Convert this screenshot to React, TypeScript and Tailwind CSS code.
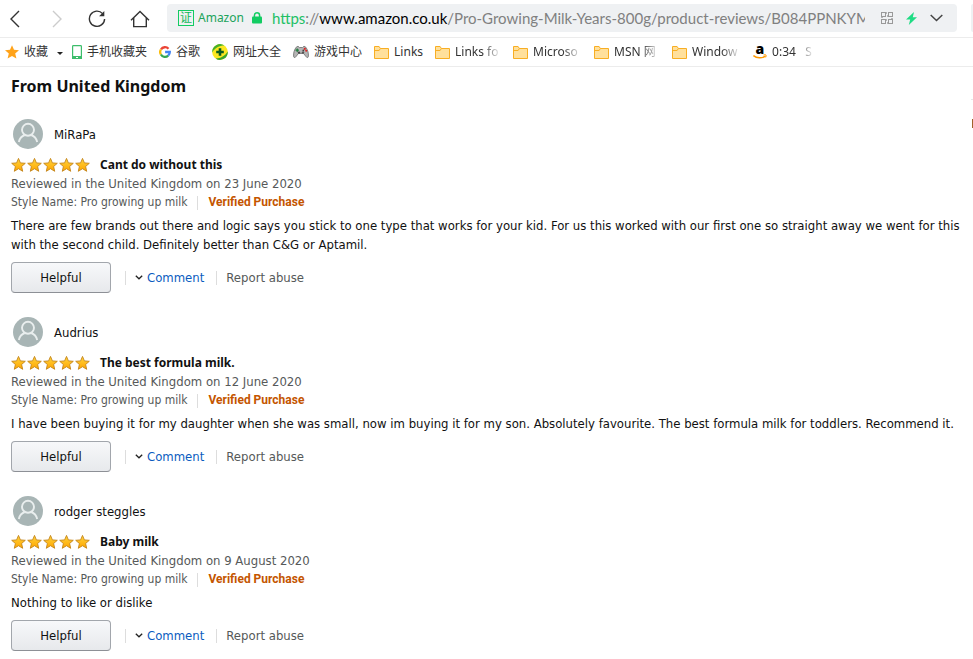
import type { ReactNode } from "react";

type Review = {
  id: string;
  author: string;
  title: string;
  date: string;
  body: string;
};

const reviews: Review[] = [
  {
    id: "r1",
    author: "MiRaPa",
    title: "Cant do without this",
    date: "23 June 2020",
    body: "There are few brands out there and logic says you stick to one type that works for your kid. For us this worked with our first one so straight away we went for this with the second child. Definitely better than C&G or Aptamil.",
  },
  {
    id: "r2",
    author: "Audrius",
    title: "The best formula milk.",
    date: "12 June 2020",
    body: "I have been buying it for my daughter when she was small, now im buying it for my son. Absolutely favourite. The best formula milk for toddlers. Recommend it.",
  },
  {
    id: "r3",
    author: "rodger steggles",
    title: "Baby milk",
    date: "9 August 2020",
    body: "Nothing to like or dislike",
  },
];

function ArrowIcon({ d, stroke }: { d: string; stroke: string }) {
  return (
    <svg width="10" height="18" viewBox="0 0 10 18" fill="none" stroke={stroke} strokeWidth="1.4">
      <path d={d} />
    </svg>
  );
}

function ReloadIcon() {
  return (
    <svg width="18" height="18" viewBox="0 0 18 18" fill="none" stroke="#333" strokeWidth="1.4">
      <path d="M14.6 3.6A7.6 7.6 0 1 0 16.6 9" />
      <path d="M16.3 1v5.2h-5.2z" fill="#333" stroke="none" />
    </svg>
  );
}

function HomeIcon() {
  return (
    <svg width="20" height="18" viewBox="0 0 20 18" fill="none" stroke="#333" strokeWidth="1.4">
      <path d="M1 10.3 10 1.4l9 8.9" />
      <path d="M3.7 8v8.6h12.6V8" />
    </svg>
  );
}

function LockIcon() {
  return (
    <svg width="10" height="12" viewBox="0 0 10 12">
      <path d="M2.4 5.5V3.4a2.6 2.6 0 0 1 5.2 0v2.1" fill="none" stroke="#12cc62" strokeWidth="1.5" />
      <rect y="4.6" width="10" height="7" rx="1" fill="#12cc62" />
    </svg>
  );
}

function QrIcon() {
  return (
    <svg width="12" height="12" viewBox="0 0 12 12" fill="none" stroke="#999">
      <rect x=".5" y=".5" width="4" height="4" />
      <rect x="7.5" y=".5" width="4" height="4" />
      <rect x=".5" y="7.5" width="4" height="4" />
      <rect x="7.5" y="7.5" width="4" height="4" />
      <path d="M5.5 0v2M6.5 3v2M0 5.5h2M5.5 7v2M6.5 10v2M10 6.5h2" strokeWidth=".7" />
    </svg>
  );
}

function StarBookmarkIcon() {
  return (
    <svg width="14" height="14" viewBox="0 0 14 14" fill="#ffa31a">
      <path d="m7 .2 2 4.6 5 .5-3.8 3.3 1.2 5L7 11l-4.4 2.6 1.2-5L0 5.3l5-.5z" />
    </svg>
  );
}

function PhoneIcon() {
  return (
    <svg width="10" height="14" viewBox="0 0 10 14">
      <rect x=".6" y=".6" width="8.8" height="12.8" rx=".8" fill="#fff" stroke="#3dbd6b" strokeWidth="1.2" />
      <path d="M0 11h10v3H0z" fill="#3dbd6b" />
      <path d="M4 12.5h2" stroke="#fff" />
    </svg>
  );
}

function GoogleIcon() {
  return (
    <svg width="12" height="12" viewBox="0 0 12 12" fill="none" strokeWidth="2.3">
      <path d="M2 3.4A4.8 4.8 0 0 1 9.5 2.7" stroke="#ea4335" />
      <path d="M1.9 8.5A4.8 4.8 0 0 1 1.9 3.5" stroke="#fbbc05" />
      <path d="M9.2 9.6A4.8 4.8 0 0 1 1.9 8.5" stroke="#34a853" />
      <path d="M6.1 6h4.7A4.8 4.8 0 0 1 9.2 9.6" stroke="#4285f4" />
    </svg>
  );
}

function DirectoryIcon() {
  return (
    <svg width="16" height="16" viewBox="0 0 16 16">
      <circle cx="8" cy="8" r="7.8" fill="#fbe720" />
      <path d="M.2 8.500A7.800 7.800 0 0 1 12.500 1.600C7.500 1.500 3 4 .2 8.500z" fill="#45b02c" />
      <path d="M15.800 7.500A7.800 7.800 0 0 1 3.500 14.400c5 .1 9.500-2.400 12.300-6.900z" fill="#3aa52c" />
      <path d="M8 4.200v7.600M4.200 8h7.600" stroke="#0a5c1e" strokeWidth="2.600" />
    </svg>
  );
}

function GamepadIcon() {
  return (
    <svg width="16" height="14" viewBox="0 0 16 14">
      <path
        d="M3.2 2.200 5 1.200l1.400 1.300h3.200L11 1.200l1.800 1c1.900 2.500 2.900 6 2.600 9-.1 1.700-1.600 1.700-2.400.4L10.600 8.500H5.400L3 11.600c-.8 1.300-2.300 1.300-2.400-.4-.3-3 .7-6.500 2.600-9z"
        fill="#b5b5b5"
        stroke="#6b6b6b"
        strokeWidth=".8"
      />
      <path d="M4.200 3.500v3.400M2.500 5.200h3.400" stroke="#1e7b3b" strokeWidth="1.200" />
      <circle cx="11.800" cy="3.800" r="1.100" fill="#d22" />
      <circle cx="13.200" cy="5.700" r="1" fill="#d22" />
      <circle cx="10.300" cy="5.500" r=".9" fill="#444" />
      <circle cx="6" cy="7.600" r="1.200" fill="#444" />
      <circle cx="10" cy="7.600" r="1.200" fill="#555" />
    </svg>
  );
}

function FolderIcon() {
  return (
    <svg width="15" height="13" viewBox="0 0 15 13" fill="#ffe09c" stroke="#f8ae23">
      <path d="M.5 12.500V.5h4.600l1.300 2h8.100v10z" />
      <path d="M.5 4.500h4.600l1.300-2" fill="none" />
    </svg>
  );
}

function AmazonIcon() {
  return (
    <svg width="14" height="14" viewBox="0 0 14 14" fill="none">
      <text x="2.500" y="9" fontFamily="Open Sans, sans-serif" fontSize="14" fontWeight="800" fill="#000">a</text>
      <path d="M.4 10.500c3.500 3 8.500 3 12 .7" stroke="#f90" strokeWidth="1.500" />
      <path d="M10.500 10c2.500-.8 3.200-.1 2.200 2.400" stroke="#f90" />
    </svg>
  );
}

function Avatar() {
  return (
    <svg className="shrink-0" width="30" height="30" viewBox="0 0 30 30" fill="none">
      <circle cx="15" cy="15" r="15" fill="#a8b5b5" />
      <circle cx="15" cy="10.800" r="6" stroke="#e9eeee" strokeWidth="1.900" />
      <path d="M5.800 23c.9-3.800 3-6 6-7M24.200 23c-.9-3.800-3-6-6-7" stroke="#e9eeee" strokeWidth="1.900" />
    </svg>
  );
}

function Stars() {
  return (
    <svg className="shrink-0" width="80" height="16" viewBox="0 0 80 16" role="img" aria-label="5 out of 5 stars">
      <defs>
        <linearGradient id="gold" x1="0" y1="0" x2="0" y2="1">
          <stop offset="0" stopColor="#ffd53d" />
          <stop offset="1" stopColor="#ffa500" />
        </linearGradient>
      </defs>
      {[0, 16, 32, 48, 64].map((x) => (
        <path
          key={x}
          transform={`translate(${x} 0)`}
          d="m7.500 1.400 1.900 4.500 4.900.4-3.700 3.200 1.100 4.800-4.200-2.600-4.200 2.600 1.100-4.800L.7 6.300l4.900-.4z"
          fill="url(#gold)"
          stroke="#c48418"
          strokeWidth=".9"
        />
      ))}
    </svg>
  );
}

function Bookmark({ icon, label, width = "" }: { icon: ReactNode; label: string; width?: string }) {
  const fade = width ? "[mask-image:linear-gradient(to_right,black_60%,transparent_100%)]" : "";
  return (
    <a href="#" className="flex shrink-0 items-center gap-[5px]">
      {icon}
      <span className={`whitespace-pre ${width} ${fade}`}>{label}</span>
    </a>
  );
}

function BrowserBar() {
  return (
    <header className="font-['Noto_Sans','Noto_Sans_CJK_SC',sans-serif]">
      <div className="mb-px flex h-9 items-center overflow-hidden">
        <div className="flex w-[167px] shrink-0 items-center pt-0.5 pl-[10px]">
          <button aria-label="Back"><ArrowIcon d="M9 1 1 9l8 8" stroke="#333" /></button>
          <button aria-label="Forward" className="ml-8"><ArrowIcon d="m1 1 8 8-8 8" stroke="#ccc" /></button>
          <button aria-label="Reload" className="ml-[26px]"><ReloadIcon /></button>
          <button aria-label="Home" className="ml-6"><HomeIcon /></button>
        </div>
        <div className="flex h-7 min-w-0 flex-1 items-center rounded bg-[#eff1f3] pr-[14px] pl-[11px]">
          <span className="flex size-4 shrink-0 items-center justify-center border border-[#12cc62] text-xs leading-none text-[#12b85a]">证</span>
          <span className="mr-2 ml-1 text-xs text-[#21a35b]">Amazon</span>
          <span className="mr-[10px]"><LockIcon /></span>
          <div role="textbox" aria-label="Address" className="min-w-0 flex-1 overflow-hidden font-['Lato',sans-serif] text-[15px] whitespace-nowrap text-[#808080]">
            <span className="text-[#21c065]">https</span>://<span className="text-black">www.amazon.co.uk</span>/Pro-Growing-Milk-Years-800g/product-reviews/B084PPNKYM
          </div>
          <div className="ml-4 flex shrink-0 items-center gap-[13px]">
            <button aria-label="QR code"><QrIcon /></button>
            <button aria-label="Speed mode">
              <svg width="11" height="13" viewBox="0 0 11 13"><path d="M8 0 0 7.500h4.200L2.800 13 11 5.300H6.800z" fill="#1fdc84" /></svg>
            </button>
            <button aria-label="Show history">
              <svg width="13" height="8" viewBox="0 0 13 8" fill="none" stroke="#444" strokeWidth="1.500"><path d="m.7 1 5.800 5.500L12.300 1" /></svg>
            </button>
          </div>
        </div>
        <div className="ml-[14px] h-7 w-0.5 shrink-0 rounded-l bg-[#eff1f3]" />
      </div>
      <nav className="flex h-[30px] items-center gap-[9px] overflow-hidden border-y border-[#ececec] pl-[5px] text-xs text-[#333]">
        <Bookmark icon={<StarBookmarkIcon />} label="收藏" />
        <button aria-label="More favourites" className="pt-0.5">
          <svg width="6" height="3" viewBox="0 0 6 3"><path d="M0 0h6L3 3z" fill="#222" /></svg>
        </button>
        <div className="flex shrink-0 items-center gap-3">
          <Bookmark icon={<PhoneIcon />} label="手机收藏夹" />
          <Bookmark icon={<GoogleIcon />} label="谷歌" />
          <Bookmark icon={<DirectoryIcon />} label="网址大全" />
          <Bookmark icon={<GamepadIcon />} label="游戏中心" />
          <Bookmark icon={<FolderIcon />} label="Links" />
          <Bookmark icon={<FolderIcon />} label="Links fo" width="w-[46px]" />
          <Bookmark icon={<FolderIcon />} label="Microso" width="w-[49px]" />
          <Bookmark icon={<FolderIcon />} label="MSN 网" width="w-[46px]" />
          <Bookmark icon={<FolderIcon />} label="Window" width="w-[49px]" />
          <Bookmark icon={<AmazonIcon />} label="0:34   S" width="w-[42px]" />
        </div>
      </nav>
    </header>
  );
}

function ReviewItem({ review }: { review: Review }) {
  return (
    <article>
      <div className="flex items-center gap-[11px] pl-0.5">
        <Avatar />
        <span>{review.author}</span>
      </div>
      <div className="mt-1.5 flex items-center gap-[9px]">
        <Stars />
        <h3 className="font-['Noto_Sans',sans-serif] text-xs leading-[19px] font-bold">{review.title}</h3>
      </div>
      <p className="text-[#565959]">Reviewed in the United Kingdom on {review.date}</p>
      <div className="flex items-center text-xs leading-[19px]">
        <span className="text-[#565959]">Style Name: Pro growing up milk</span>
        <span className="mx-[10px] h-[14px] w-px bg-[#ddd]" />
        <span className="font-['Roboto',sans-serif] font-bold text-[#c45500]">Verified Purchase</span>
      </div>
      <p className="mt-1">{review.body}</p>
      <div className="mt-2 flex items-center">
        <button className="h-[31px] w-[100px] rounded-sm border border-[#a2a6ac] border-b-[#8d9096] bg-linear-to-b from-[#f7f8fa] to-[#e7e9ec]">
          Helpful
        </button>
        <span className="mr-[9px] ml-[14px] h-[14px] w-px bg-[#ddd]" />
        <button className="flex items-center gap-1 text-[#0b5cc0]">
          <svg width="8" height="5" viewBox="0 0 8 5" fill="none" stroke="#222" strokeWidth="1.300"><path d="m.8.800 3.200 3 3.200-3" /></svg>
          Comment
        </button>
        <span className="mr-[9px] ml-3 h-[14px] w-px bg-[#ddd]" />
        <a href="#" className="text-[#565959]">Report abuse</a>
      </div>
    </article>
  );
}

export default function App() {
  return (
    <div className="min-h-screen bg-white">
      <BrowserBar />
      <main className="relative px-[11px] pt-[7px] pb-2 font-['DejaVu_Sans_Condensed',sans-serif] text-[13px] leading-[19px] text-[#111]">
        <h2 className="font-['Noto_Sans',sans-serif] text-base leading-6 font-bold">From United Kingdom</h2>
        <div className="mt-[21px] flex flex-col gap-6">
          {reviews.map((review) => (
            <ReviewItem key={review.id} review={review} />
          ))}
        </div>
        <span className="absolute top-8 right-0 h-px w-0.5 bg-[#e7e7e7]" />
        <span className="absolute top-[52px] right-0 h-[9px] w-px bg-[#a0622b]" />
      </main>
    </div>
  );
}
